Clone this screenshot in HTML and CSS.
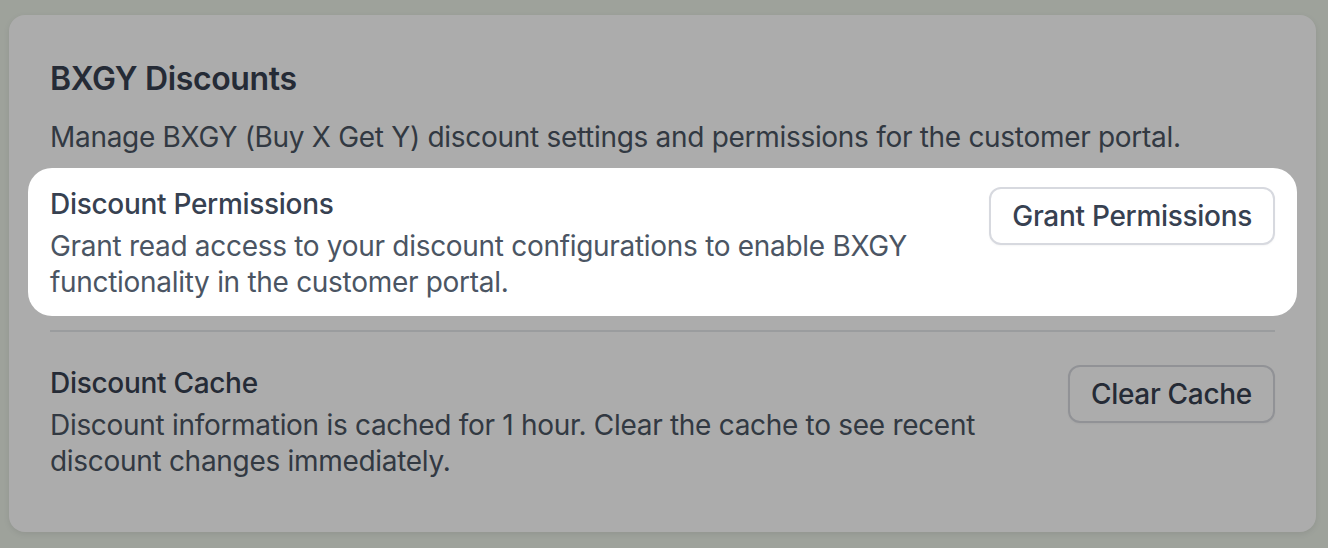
FILE: index.html
```html
<!DOCTYPE html>
<html lang="en">
<head>
<meta charset="utf-8">
<title>BXGY Discounts</title>
<link rel="stylesheet" href="styles.css">
</head>
<body>
  <main class="card">
    <h2 class="card-title">BXGY Discounts</h2>
    <p class="card-desc">Manage BXGY (Buy X Get Y) discount settings and permissions for the customer portal.</p>

    <section class="row row-spotlight">
      <div class="row-text">
        <h3 class="row-title">Discount Permissions</h3>
        <p class="row-desc">Grant read access to your discount configurations to enable BXGY functionality in the customer portal.</p>
      </div>
      <button class="btn" type="button">Grant Permissions</button>
    </section>

    <hr class="divider">

    <section class="row row-plain">
      <div class="row-text">
        <h3 class="row-title">Discount Cache</h3>
        <p class="row-desc">Discount information is cached for 1 hour. Clear the cache to see recent discount changes immediately.</p>
      </div>
      <button class="btn" type="button">Clear Cache</button>
    </section>
  </main>
</body>
</html>
```
FILE: styles.css
```css
* { box-sizing: border-box; }

html, body {
  margin: 0;
  height: 100%;
}

body {
  background: #eaf0e6;
  padding: 15px 12px 16px 9px;
  font-family: Inter, "Noto Sans", "Liberation Sans", sans-serif;
  color: #374151;
  overflow: hidden;
  letter-spacing: -0.3px;
}

.card {
  width: 1307px;
  height: 517px;
  background: #ffffff;
  border-radius: 16px;
  box-shadow: 0 2px 6px rgba(0, 0, 0, 0.08);
  padding: 44px 41px 0 41px;
}

.card-title {
  margin: 0;
  font-size: 32px;
  line-height: 40px;
  font-weight: 600;
  color: #374151;
  letter-spacing: -0.35px;
}

.card-desc {
  margin: 18px 0 0;
  font-size: 28px;
  line-height: 40px;
  color: #4b5563;
}

.row {
  display: flex;
  justify-content: space-between;
  align-items: flex-start;
  gap: 32px;
}

.row-spotlight {
  position: relative;
  z-index: 1;
  margin: 11px -22px 0;
  padding: 18px 22px 16px;
  background: #ffffff;
  border-radius: 24px;
  box-shadow: 0 0 0 3000px rgba(0, 0, 0, 0.325);
}

.row-spotlight .btn {
  margin-top: 1px;
}

.row-plain {
  padding-top: 33px;
}

.row-text {
  flex: 1;
  min-width: 0;
}

.row-title {
  margin: 0;
  font-size: 28px;
  line-height: 36px;
  font-weight: 500;
  color: #374151;
}

.row-desc {
  margin: 6px 0 0;
  font-size: 28px;
  line-height: 36px;
  color: #4b5563;
}

.divider {
  margin: 14px 0 0;
  border: 0;
  height: 2px;
  background: #e5e7eb;
}

.btn {
  flex: none;
  font-family: inherit;
  font-size: 28px;
  line-height: 36px;
  font-weight: 500;
  letter-spacing: -0.3px;
  color: #374151;
  background: #ffffff;
  border: 2px solid #d7d9df;
  border-radius: 12px;
  padding: 9px 21px;
  box-shadow: 0 1px 2px rgba(0, 0, 0, 0.04);
}
```
